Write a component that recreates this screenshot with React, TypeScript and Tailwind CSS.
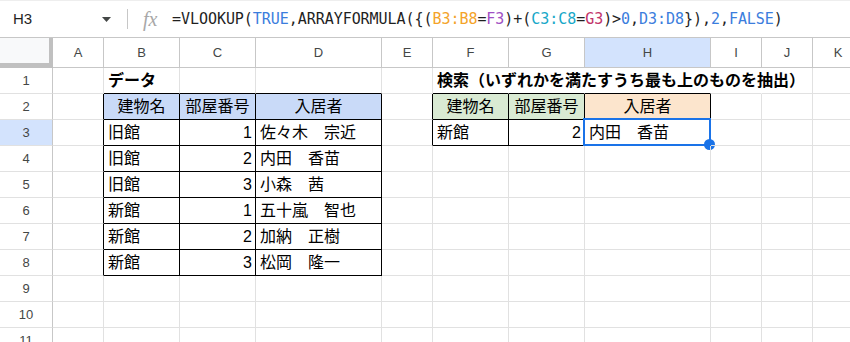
import React from 'react';

type Col = { key: string; w: string };
type Cell = { t: string; align?: 'l' | 'r' | 'c'; bg?: string; bold?: boolean };

const COLS: Col[] = [
  { key: 'A', w: 'w-[51px]' },
  { key: 'B', w: 'w-[76px]' },
  { key: 'C', w: 'w-[76px]' },
  { key: 'D', w: 'w-[126px]' },
  { key: 'E', w: 'w-[51px]' },
  { key: 'F', w: 'w-[76px]' },
  { key: 'G', w: 'w-[76px]' },
  { key: 'H', w: 'w-[126px]' },
  { key: 'I', w: 'w-[51px]' },
  { key: 'J', w: 'w-[51px]' },
  { key: 'K', w: 'w-[51px]' },
];

const ROWS = [1, 2, 3, 4, 5, 6, 7, 8, 9, 10, 11];

const BLUE_HEAD = 'bg-[#c9daf8]';
const GREEN_HEAD = 'bg-[#d9ead3]';
const ORANGE_HEAD = 'bg-[#fce5cd]';

const residents = [
  ['旧館', '1', '佐々木　宗近'],
  ['旧館', '2', '内田　香苗'],
  ['旧館', '3', '小森　茜'],
  ['新館', '1', '五十嵐　智也'],
  ['新館', '2', '加納　正樹'],
  ['新館', '3', '松岡　隆一'],
];

const data: Record<string, Cell> = {
  B1: { t: 'データ', bold: true },
  F1: { t: '検索（いずれかを満たすうち最も上のものを抽出）', bold: true },
  B2: { t: '建物名', align: 'c', bg: BLUE_HEAD },
  C2: { t: '部屋番号', align: 'c', bg: BLUE_HEAD },
  D2: { t: '入居者', align: 'c', bg: BLUE_HEAD },
  F2: { t: '建物名', align: 'c', bg: GREEN_HEAD },
  G2: { t: '部屋番号', align: 'c', bg: GREEN_HEAD },
  H2: { t: '入居者', align: 'c', bg: ORANGE_HEAD },
  F3: { t: '新館' },
  G3: { t: '2', align: 'r' },
  H3: { t: '内田　香苗' },
};

residents.forEach((r, i) => {
  const row = i + 3;
  data['B' + row] = { t: r[0] };
  data['C' + row] = { t: r[1], align: 'r' };
  data['D' + row] = { t: r[2] };
});

function inTable(ci: number, r: number) {
  const k = COLS[ci]?.key;
  if (!k) return false;
  if (['B', 'C', 'D'].includes(k) && r >= 2 && r <= 8) return true;
  if (['F', 'G', 'H'].includes(k) && r >= 2 && r <= 3) return true;
  return false;
}

const FORMULA: [string, string][] = [
  ['=VLOOKUP(', 'text-[#1f1f1f]'],
  ['TRUE', 'text-[#3b7ddd]'],
  [',ARRAYFORMULA({(', 'text-[#1f1f1f]'],
  ['B3:B8', 'text-[#f4a328]'],
  ['=', 'text-[#1f1f1f]'],
  ['F3', 'text-[#a04fc4]'],
  [')+(', 'text-[#1f1f1f]'],
  ['C3:C8', 'text-[#17a7c8]'],
  ['=', 'text-[#1f1f1f]'],
  ['G3', 'text-[#c2336a]'],
  [')>', 'text-[#1f1f1f]'],
  ['0', 'text-[#3b7ddd]'],
  [',', 'text-[#1f1f1f]'],
  ['D3:D8', 'text-[#3b7ddd]'],
  ['}),', 'text-[#1f1f1f]'],
  ['2', 'text-[#3b7ddd]'],
  [',', 'text-[#1f1f1f]'],
  ['FALSE', 'text-[#3b7ddd]'],
  [')', 'text-[#1f1f1f]'],
];

function FormulaBar() {
  return (
    <div className="flex items-center h-[38px] border-t border-t-[#eeeeee] border-b border-b-[#c7c7c7] bg-white">
      {/* Name box */}
      <div className="flex items-center justify-between w-[127px] pl-[13px] pr-[16px]">
        <span className="text-[15px] text-[#1f1f1f] font-['Liberation_Sans',sans-serif]">H3</span>
        <svg width="9" height="5" viewBox="0 0 9 5">
          <polygon points="0,0 9,0 4.5,5" fill="#444746" />
        </svg>
      </div>
      <div className="w-px h-[20px] bg-[#c7c7c7]" />
      <span className="ml-[15px] w-[16px] italic text-[20px] leading-none text-[#a8a8a8] font-['Liberation_Serif',serif]">
        fx
      </span>
      <div className="ml-[13px] text-[15px] whitespace-nowrap font-['DejaVu_Sans_Mono',monospace] tracking-[-0.05px]">
        {FORMULA.map(([s, c], i) => (
          <span key={i} className={c}>
            {s}
          </span>
        ))}
      </div>
    </div>
  );
}

function ColumnHeader() {
  return (
    <div className="flex h-[30px]">
      <div className="w-[53px] shrink-0 bg-[#f8f9fa] border-r-[4px] border-b-[5px] border-[#c0c0c0]" />
      {COLS.map((c) => (
        <div
          key={c.key}
          className={`${c.w} shrink-0 flex items-center justify-center border-r border-b border-[#c7c7c7] text-[13px] text-[#444746] font-['Liberation_Sans',sans-serif] ${
            c.key === 'H' ? 'bg-[#d3e3fd]' : 'bg-white'
          }`}
        >
          {c.key}
        </div>
      ))}
    </div>
  );
}

function GridRow({ r }: { r: number }) {
  return (
    <div className="flex h-[26px]">
      <div
        className={`w-[53px] shrink-0 flex items-center justify-center border-r border-r-[#c7c7c7] border-b border-b-[#e1e1e1] text-[13px] text-[#444746] font-['Liberation_Sans',sans-serif] ${
          r === 3 ? 'bg-[#d3e3fd]' : 'bg-white'
        }`}
      >
        {r}
      </div>
      {COLS.map((c, ci) => {
        const cell = data[c.key + r];
        const overflowHide = r === 1 && ['F', 'G', 'H', 'I'].includes(c.key);
        const right = overflowHide
          ? 'border-r-transparent'
          : inTable(ci, r) || inTable(ci + 1, r)
          ? 'border-r-black'
          : 'border-r-[#e1e1e1]';
        const bottom = inTable(ci, r) || inTable(ci, r + 1) ? 'border-b-black' : 'border-b-[#e1e1e1]';
        const align =
          cell?.align === 'r' ? 'justify-end pr-[3px]' : cell?.align === 'c' ? 'justify-center' : 'justify-start pl-[4px]';
        const selected = c.key === 'H' && r === 3;
        return (
          <div
            key={c.key}
            className={`${c.w} shrink-0 relative flex items-center border-r border-b ${right} ${bottom} ${align} ${
              cell?.bg ?? ''
            }`}
          >
            {cell && (
              <span
                className={`whitespace-nowrap text-[16px] leading-none pt-[1px] text-black font-['Liberation_Sans','Noto_Sans_CJK_JP',sans-serif] ${
                  cell.bold ? 'font-bold' : ''
                }`}
              >
                {cell.t}
              </span>
            )}
            {selected && (
              <div className="absolute -left-[2px] -top-[2px] -right-[1px] -bottom-[1px] border-2 border-[#1a73e8]">
                <div className="absolute -right-[6px] -bottom-[6px] w-[11px] h-[11px] rounded-full bg-[#1a73e8]" />
              </div>
            )}
          </div>
        );
      })}
    </div>
  );
}

export default function App() {
  return (
    <div className="w-[850px] h-[342px] overflow-hidden bg-white">
      <FormulaBar />
      <div className="w-[1000px]">
        <ColumnHeader />
        {ROWS.map((r) => (
          <GridRow key={r} r={r} />
        ))}
      </div>
    </div>
  );
}
